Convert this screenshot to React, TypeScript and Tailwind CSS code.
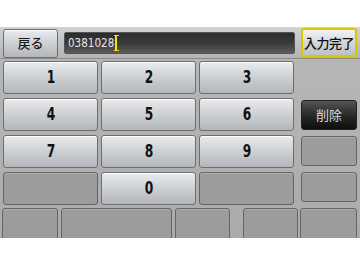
import React from 'react';

const KEYS = ['1', '2', '3', '4', '5', '6', '7', '8', '9'];

const lightBtn =
  'flex items-center justify-center rounded-[3px] border border-[#6e6e6e] bg-gradient-to-b from-[#e9ebed] via-[#cdd0d3] to-[#b3b6ba] shadow-[inset_0_1px_0_#ffffff]';
const grayBtn =
  'rounded-[3px] border border-[#646464] bg-[#9c9c9c] shadow-[inset_0_1px_0_#b0b0b0]';

const Key: React.FC<{ label?: string }> = ({ label }) =>
  label ? (
    <div className={`${lightBtn} h-[33px]`}>
      <span className="inline-block scale-x-[0.72] font-['DejaVu_Sans',sans-serif] text-[17px] font-bold text-[#111]">
        {label}
      </span>
    </div>
  ) : (
    <div className={`${grayBtn} h-[33px]`} />
  );

const App: React.FC = () => {
  return (
    <div className="w-[360px] h-[270px] bg-white flex flex-col overflow-hidden font-['Noto_Sans_CJK_JP',sans-serif]">
      <div className="h-[27px] shrink-0" />
      <div className="h-[211px] shrink-0 overflow-hidden bg-gradient-to-b from-[#b9b9b9] to-[#ababab]">
        {/* top bar */}
        <div className="h-[32px] flex items-center pl-[3px] bg-gradient-to-b from-[#d2d2d2] to-[#b4b4b4] border-b border-[#8a8a8a]">
          <div className={`${lightBtn} w-[55px] h-[29px] mt-[1px]`}>
            <span className="text-[13px] font-medium text-[#1a1a1a]">戻る</span>
          </div>
          <div className="ml-[6px] w-[231px] h-[22px] rounded-[2px] border border-[#555] bg-gradient-to-b from-[#2c2c2c] via-[#3a3a3a] to-[#5c5c5c] flex items-center pl-[3px]">
            <span className="inline-block origin-left scale-x-[0.8] font-['DejaVu_Sans',sans-serif] text-[13px] text-[#e6e6e6]">
              0381028
            </span>
            <span className="-ml-[12px] flex flex-col items-center">
              <span className="w-[5px] h-[1px] bg-[#f2e21a]" />
              <span className="w-[2px] h-[14px] bg-[#f2e21a]" />
              <span className="w-[5px] h-[1px] bg-[#f2e21a]" />
            </span>
          </div>
          <div className="ml-[6px] w-[56px] h-[29px] rounded-[3px] border-2 border-[#d9c800] bg-gradient-to-b from-[#f0f2f4] to-[#bcbfc3] flex items-center justify-center">
            <span className="text-[13px] font-medium text-[#111] tracking-[-0.5px]">入力完了</span>
          </div>
        </div>

        {/* keypad */}
        <div className="flex pl-[3px] pt-[2px]">
          <div className="w-[291px] grid grid-cols-3 gap-x-[3px] gap-y-[4px]">
            {KEYS.map((k) => (
              <Key key={k} label={k} />
            ))}
            <Key />
            <Key label="0" />
            <Key />
          </div>
          <div className="ml-[7px] w-[56px] flex flex-col">
            <div className="h-[39px]" />
            <div className="h-[30px] rounded-[3px] border border-[#222] bg-gradient-to-b from-[#555] via-[#2a2a2a] to-[#0e0e0e] flex items-center justify-center">
              <span className="text-[13px] text-[#d8d8d8]">削除</span>
            </div>
            <div className={`${grayBtn} h-[30px] mt-[6px]`} />
            <div className={`${grayBtn} h-[30px] mt-[6px]`} />
          </div>
        </div>

        {/* bottom row */}
        <div className="flex mt-[3px] pl-[2px]">
          <div className={`${grayBtn} w-[56px] h-[34px]`} />
          <div className={`${grayBtn} w-[111px] h-[34px] ml-[3px]`} />
          <div className={`${grayBtn} w-[55px] h-[34px] ml-[3px]`} />
          <div className={`${grayBtn} w-[55px] h-[34px] ml-[13px]`} />
          <div className={`${grayBtn} w-[57px] h-[34px] ml-[2px]`} />
        </div>
      </div>
    </div>
  );
};

export default App;
